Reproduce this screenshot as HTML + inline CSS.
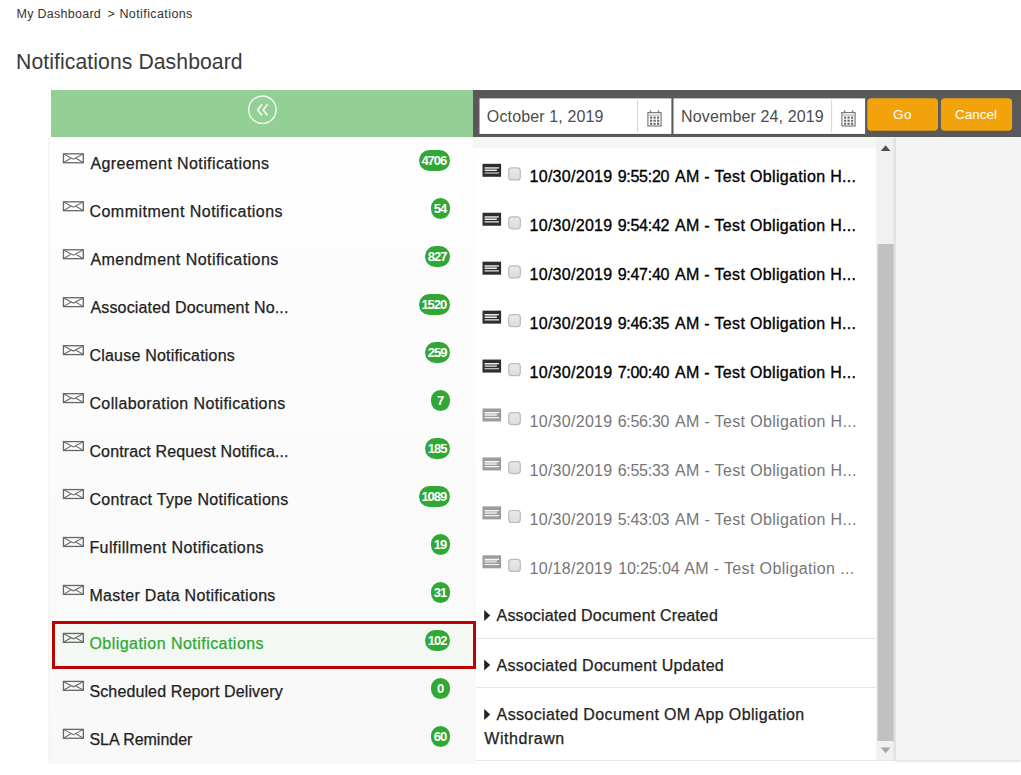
<!DOCTYPE html>
<html lang="en"><head><meta charset="utf-8"><title>Notifications Dashboard</title>
<style>
html,body{margin:0;padding:0;background:#fff;}
body{width:1021px;height:775px;position:relative;overflow:hidden;font-family:"Liberation Sans",sans-serif;}
.a{position:absolute;display:block;}
.t{position:absolute;white-space:pre;line-height:20px;font-family:"Liberation Sans",sans-serif;}
.badge{position:absolute;height:21px;border-radius:10.5px;background:#2fa836;color:#fff;font-weight:bold;font-size:13px;line-height:22px;text-align:center;letter-spacing:-1px;font-family:"Liberation Sans",sans-serif;text-indent:-1px;}
</style></head><body>
<!-- left header -->
<div class="a" style="left:51px;top:90px;width:422px;height:47px;background:#94cf96"></div>
<!-- left list panel -->
<div class="a" style="left:48px;top:137px;width:428px;height:627px;background:linear-gradient(#fefefe,#f8f8f8);border-left:2px solid #f6f6f6;box-sizing:border-box"></div>
<div class="a" style="left:52px;top:621px;width:424px;height:48px;box-sizing:border-box;border:3px solid #c00000;background:#f3f8f2"></div>
<!-- dark toolbar -->
<div class="a" style="left:473px;top:90px;width:548px;height:47px;background:#595959"></div>
<svg class="a" style="left:0;top:0" width="1021" height="775" viewBox="0 0 1021 775">
<rect x="479.5" y="98.4" width="191.9" height="35.5" fill="#fff"/>
<rect x="673.5" y="98.4" width="191.6" height="35.5" fill="#fff"/>
<rect x="637.1" y="100" width="1" height="32" fill="#d4d4d4"/>
<rect x="831.1" y="100" width="1" height="32" fill="#d4d4d4"/>
<rect x="867.2" y="98.3" width="70.8" height="32.4" rx="4" fill="#f2a30b"/>
<rect x="940.9" y="98.3" width="71.2" height="32.4" rx="4" fill="#f2a30b"/>
</svg>
<!-- content area -->
<div class="a" style="left:473px;top:137px;width:403px;height:11.4px;background:#f3f8f2"></div>
<div class="a" style="left:476px;top:638px;width:400px;height:1px;background:#e6e6e6"></div>
<div class="a" style="left:476px;top:687px;width:400px;height:1px;background:#e6e6e6"></div>
<div class="a" style="left:476px;top:760px;width:419px;height:1px;background:#e6e6e6"></div>
<!-- scrollbar -->
<div class="a" style="left:876px;top:137px;width:19px;height:623px;background:#f1f1f1"></div>
<svg class="a" style="left:0;top:0" width="1021" height="775" viewBox="0 0 1021 775"><rect x="877.6" y="244" width="16" height="497" fill="#c1c1c1"/></svg>
<!-- right panel -->
<div class="a" style="left:895px;top:137px;width:126px;height:623px;background:#f4f4f4;border-left:1px solid #e2e2e2;box-sizing:border-box;box-shadow:0 1px 3px rgba(0,0,0,0.18)"></div>
<!-- icons overlay -->
<svg class="a" style="left:0;top:0" width="1021" height="775" viewBox="0 0 1021 775">
<defs><linearGradient id="cbg" x1="0" y1="0" x2="0" y2="1"><stop offset="0" stop-color="#e9e9e9"/><stop offset="1" stop-color="#dcdcdc"/></linearGradient></defs>
<g transform="translate(62.80,153.20)"><rect x="0.65" y="0.65" width="19.9" height="8.9" fill="none" stroke="#666" stroke-width="1.3"/><path d="M0.9 0.9 L10.6 6 L20.3 0.9 M0.9 9.3 L8.5 4.9 M20.3 9.3 L12.7 4.9" fill="none" stroke="#6c6c6c" stroke-width="1.1"/></g>
<g transform="translate(62.80,201.16)"><rect x="0.65" y="0.65" width="19.9" height="8.9" fill="none" stroke="#666" stroke-width="1.3"/><path d="M0.9 0.9 L10.6 6 L20.3 0.9 M0.9 9.3 L8.5 4.9 M20.3 9.3 L12.7 4.9" fill="none" stroke="#6c6c6c" stroke-width="1.1"/></g>
<g transform="translate(62.80,249.12)"><rect x="0.65" y="0.65" width="19.9" height="8.9" fill="none" stroke="#666" stroke-width="1.3"/><path d="M0.9 0.9 L10.6 6 L20.3 0.9 M0.9 9.3 L8.5 4.9 M20.3 9.3 L12.7 4.9" fill="none" stroke="#6c6c6c" stroke-width="1.1"/></g>
<g transform="translate(62.80,297.08)"><rect x="0.65" y="0.65" width="19.9" height="8.9" fill="none" stroke="#666" stroke-width="1.3"/><path d="M0.9 0.9 L10.6 6 L20.3 0.9 M0.9 9.3 L8.5 4.9 M20.3 9.3 L12.7 4.9" fill="none" stroke="#6c6c6c" stroke-width="1.1"/></g>
<g transform="translate(62.80,345.04)"><rect x="0.65" y="0.65" width="19.9" height="8.9" fill="none" stroke="#666" stroke-width="1.3"/><path d="M0.9 0.9 L10.6 6 L20.3 0.9 M0.9 9.3 L8.5 4.9 M20.3 9.3 L12.7 4.9" fill="none" stroke="#6c6c6c" stroke-width="1.1"/></g>
<g transform="translate(62.80,393.00)"><rect x="0.65" y="0.65" width="19.9" height="8.9" fill="none" stroke="#666" stroke-width="1.3"/><path d="M0.9 0.9 L10.6 6 L20.3 0.9 M0.9 9.3 L8.5 4.9 M20.3 9.3 L12.7 4.9" fill="none" stroke="#6c6c6c" stroke-width="1.1"/></g>
<g transform="translate(62.80,440.96)"><rect x="0.65" y="0.65" width="19.9" height="8.9" fill="none" stroke="#666" stroke-width="1.3"/><path d="M0.9 0.9 L10.6 6 L20.3 0.9 M0.9 9.3 L8.5 4.9 M20.3 9.3 L12.7 4.9" fill="none" stroke="#6c6c6c" stroke-width="1.1"/></g>
<g transform="translate(62.80,488.92)"><rect x="0.65" y="0.65" width="19.9" height="8.9" fill="none" stroke="#666" stroke-width="1.3"/><path d="M0.9 0.9 L10.6 6 L20.3 0.9 M0.9 9.3 L8.5 4.9 M20.3 9.3 L12.7 4.9" fill="none" stroke="#6c6c6c" stroke-width="1.1"/></g>
<g transform="translate(62.80,536.88)"><rect x="0.65" y="0.65" width="19.9" height="8.9" fill="none" stroke="#666" stroke-width="1.3"/><path d="M0.9 0.9 L10.6 6 L20.3 0.9 M0.9 9.3 L8.5 4.9 M20.3 9.3 L12.7 4.9" fill="none" stroke="#6c6c6c" stroke-width="1.1"/></g>
<g transform="translate(62.80,584.84)"><rect x="0.65" y="0.65" width="19.9" height="8.9" fill="none" stroke="#666" stroke-width="1.3"/><path d="M0.9 0.9 L10.6 6 L20.3 0.9 M0.9 9.3 L8.5 4.9 M20.3 9.3 L12.7 4.9" fill="none" stroke="#6c6c6c" stroke-width="1.1"/></g>
<g transform="translate(62.80,632.80)"><rect x="0.65" y="0.65" width="19.9" height="8.9" fill="none" stroke="#666" stroke-width="1.3"/><path d="M0.9 0.9 L10.6 6 L20.3 0.9 M0.9 9.3 L8.5 4.9 M20.3 9.3 L12.7 4.9" fill="none" stroke="#6c6c6c" stroke-width="1.1"/></g>
<g transform="translate(62.80,680.76)"><rect x="0.65" y="0.65" width="19.9" height="8.9" fill="none" stroke="#666" stroke-width="1.3"/><path d="M0.9 0.9 L10.6 6 L20.3 0.9 M0.9 9.3 L8.5 4.9 M20.3 9.3 L12.7 4.9" fill="none" stroke="#6c6c6c" stroke-width="1.1"/></g>
<g transform="translate(62.80,728.72)"><rect x="0.65" y="0.65" width="19.9" height="8.9" fill="none" stroke="#666" stroke-width="1.3"/><path d="M0.9 0.9 L10.6 6 L20.3 0.9 M0.9 9.3 L8.5 4.9 M20.3 9.3 L12.7 4.9" fill="none" stroke="#6c6c6c" stroke-width="1.1"/></g>
<g transform="translate(482.50,163.80)"><rect x="0" y="0" width="18.6" height="13" fill="#2e2e2e"/><rect x="2.1" y="4.6" width="12.4" height="1.5" fill="#fff" opacity="0.45"/><path d="M2.1 4.1 H16.5 M2.1 6.7 H14.3 M2.1 9.2 H16.5" stroke="#fff" stroke-width="1.2" fill="none" opacity="0.9"/></g>
<rect x="508.70" y="167.90" width="11.6" height="12" rx="3" ry="3" fill="url(#cbg)" stroke="#bbb" stroke-width="1.2"/>
<g transform="translate(482.50,212.74)"><rect x="0" y="0" width="18.6" height="13" fill="#2e2e2e"/><rect x="2.1" y="4.6" width="12.4" height="1.5" fill="#fff" opacity="0.45"/><path d="M2.1 4.1 H16.5 M2.1 6.7 H14.3 M2.1 9.2 H16.5" stroke="#fff" stroke-width="1.2" fill="none" opacity="0.9"/></g>
<rect x="508.70" y="216.84" width="11.6" height="12" rx="3" ry="3" fill="url(#cbg)" stroke="#bbb" stroke-width="1.2"/>
<g transform="translate(482.50,261.68)"><rect x="0" y="0" width="18.6" height="13" fill="#2e2e2e"/><rect x="2.1" y="4.6" width="12.4" height="1.5" fill="#fff" opacity="0.45"/><path d="M2.1 4.1 H16.5 M2.1 6.7 H14.3 M2.1 9.2 H16.5" stroke="#fff" stroke-width="1.2" fill="none" opacity="0.9"/></g>
<rect x="508.70" y="265.78" width="11.6" height="12" rx="3" ry="3" fill="url(#cbg)" stroke="#bbb" stroke-width="1.2"/>
<g transform="translate(482.50,310.62)"><rect x="0" y="0" width="18.6" height="13" fill="#2e2e2e"/><rect x="2.1" y="4.6" width="12.4" height="1.5" fill="#fff" opacity="0.45"/><path d="M2.1 4.1 H16.5 M2.1 6.7 H14.3 M2.1 9.2 H16.5" stroke="#fff" stroke-width="1.2" fill="none" opacity="0.9"/></g>
<rect x="508.70" y="314.72" width="11.6" height="12" rx="3" ry="3" fill="url(#cbg)" stroke="#bbb" stroke-width="1.2"/>
<g transform="translate(482.50,359.56)"><rect x="0" y="0" width="18.6" height="13" fill="#2e2e2e"/><rect x="2.1" y="4.6" width="12.4" height="1.5" fill="#fff" opacity="0.45"/><path d="M2.1 4.1 H16.5 M2.1 6.7 H14.3 M2.1 9.2 H16.5" stroke="#fff" stroke-width="1.2" fill="none" opacity="0.9"/></g>
<rect x="508.70" y="363.66" width="11.6" height="12" rx="3" ry="3" fill="url(#cbg)" stroke="#bbb" stroke-width="1.2"/>
<g transform="translate(482.50,408.50)"><rect x="0" y="0" width="18.6" height="13" fill="#9c9c9c"/><rect x="2.1" y="4.6" width="12.4" height="1.5" fill="#fff" opacity="0.45"/><path d="M2.1 4.1 H16.5 M2.1 6.7 H14.3 M2.1 9.2 H16.5" stroke="#fff" stroke-width="1.2" fill="none" opacity="0.9"/></g>
<rect x="508.70" y="412.60" width="11.6" height="12" rx="3" ry="3" fill="url(#cbg)" stroke="#bbb" stroke-width="1.2"/>
<g transform="translate(482.50,457.44)"><rect x="0" y="0" width="18.6" height="13" fill="#9c9c9c"/><rect x="2.1" y="4.6" width="12.4" height="1.5" fill="#fff" opacity="0.45"/><path d="M2.1 4.1 H16.5 M2.1 6.7 H14.3 M2.1 9.2 H16.5" stroke="#fff" stroke-width="1.2" fill="none" opacity="0.9"/></g>
<rect x="508.70" y="461.54" width="11.6" height="12" rx="3" ry="3" fill="url(#cbg)" stroke="#bbb" stroke-width="1.2"/>
<g transform="translate(482.50,506.38)"><rect x="0" y="0" width="18.6" height="13" fill="#9c9c9c"/><rect x="2.1" y="4.6" width="12.4" height="1.5" fill="#fff" opacity="0.45"/><path d="M2.1 4.1 H16.5 M2.1 6.7 H14.3 M2.1 9.2 H16.5" stroke="#fff" stroke-width="1.2" fill="none" opacity="0.9"/></g>
<rect x="508.70" y="510.48" width="11.6" height="12" rx="3" ry="3" fill="url(#cbg)" stroke="#bbb" stroke-width="1.2"/>
<g transform="translate(482.50,555.32)"><rect x="0" y="0" width="18.6" height="13" fill="#9c9c9c"/><rect x="2.1" y="4.6" width="12.4" height="1.5" fill="#fff" opacity="0.45"/><path d="M2.1 4.1 H16.5 M2.1 6.7 H14.3 M2.1 9.2 H16.5" stroke="#fff" stroke-width="1.2" fill="none" opacity="0.9"/></g>
<rect x="508.70" y="559.42" width="11.6" height="12" rx="3" ry="3" fill="url(#cbg)" stroke="#bbb" stroke-width="1.2"/>
<path transform="translate(484.2,610.10)" d="M0 0 L6 5.5 L0 11 Z" fill="#222"/>
<path transform="translate(484.2,659.50)" d="M0 0 L6 5.5 L0 11 Z" fill="#222"/>
<path transform="translate(484.2,709.00)" d="M0 0 L6 5.5 L0 11 Z" fill="#222"/>
<g transform="translate(647.30,110.20)"><rect x="0.6" y="2.4" width="13.2" height="13.4" fill="#fff" stroke="#7d7d7d" stroke-width="1.2"/><path d="M3.2 0.4 V2.8 M11.2 0.4 V2.8" stroke="#777" stroke-width="1.4"/><path d="M1.2 4.9 H13.2" stroke="#aaa" stroke-width="1"/><rect x="2.70" y="6.40" width="2.2" height="2" fill="#666"/><rect x="2.70" y="9.50" width="2.2" height="2" fill="#666"/><rect x="2.70" y="12.60" width="2.2" height="2" fill="#666"/><rect x="6.20" y="6.40" width="2.2" height="2" fill="#666"/><rect x="6.20" y="9.50" width="2.2" height="2" fill="#666"/><rect x="6.20" y="12.60" width="2.2" height="2" fill="#666"/><rect x="9.70" y="6.40" width="2.2" height="2" fill="#666"/><rect x="9.70" y="9.50" width="2.2" height="2" fill="#666"/><rect x="9.70" y="12.60" width="2.2" height="2" fill="#666"/></g>
<g transform="translate(841.30,110.20)"><rect x="0.6" y="2.4" width="13.2" height="13.4" fill="#fff" stroke="#7d7d7d" stroke-width="1.2"/><path d="M3.2 0.4 V2.8 M11.2 0.4 V2.8" stroke="#777" stroke-width="1.4"/><path d="M1.2 4.9 H13.2" stroke="#aaa" stroke-width="1"/><rect x="2.70" y="6.40" width="2.2" height="2" fill="#666"/><rect x="2.70" y="9.50" width="2.2" height="2" fill="#666"/><rect x="2.70" y="12.60" width="2.2" height="2" fill="#666"/><rect x="6.20" y="6.40" width="2.2" height="2" fill="#666"/><rect x="6.20" y="9.50" width="2.2" height="2" fill="#666"/><rect x="6.20" y="12.60" width="2.2" height="2" fill="#666"/><rect x="9.70" y="6.40" width="2.2" height="2" fill="#666"/><rect x="9.70" y="9.50" width="2.2" height="2" fill="#666"/><rect x="9.70" y="12.60" width="2.2" height="2" fill="#666"/></g>
<circle cx="262.4" cy="109.7" r="13.7" fill="none" stroke="#f1faf1" stroke-width="1.4"/>
<path d="M262 104.2 L257.7 109.9 L262 115.6 M267.5 104.2 L263.2 109.9 L267.5 115.6" fill="none" stroke="#f6fbf6" stroke-width="1.7"/>
<path d="M880.8 151 L885.6 145.3 L890.4 151 Z" fill="#505050"/>
<path d="M880.8 747.6 L885.6 753.2 L890.4 747.6 Z" fill="#a3a3a3"/>
</svg>
<span class="badge" style="left:419.0px;top:150.4px;width:30.7px">4706</span>
<span class="badge" style="left:431.3px;top:198.4px;width:18.4px">54</span>
<span class="badge" style="left:425.4px;top:246.3px;width:24.3px">827</span>
<span class="badge" style="left:419.0px;top:294.3px;width:30.7px">1520</span>
<span class="badge" style="left:425.4px;top:342.2px;width:24.3px">259</span>
<span class="badge" style="left:431.3px;top:390.2px;width:18.4px">7</span>
<span class="badge" style="left:425.4px;top:438.2px;width:24.3px">185</span>
<span class="badge" style="left:419.0px;top:486.1px;width:30.7px">1089</span>
<span class="badge" style="left:431.3px;top:534.1px;width:18.4px">19</span>
<span class="badge" style="left:431.3px;top:582.0px;width:18.4px">31</span>
<span class="badge" style="left:425.4px;top:630.0px;width:24.3px">102</span>
<span class="badge" style="left:431.3px;top:678.0px;width:18.4px">0</span>
<span class="badge" style="left:431.3px;top:725.9px;width:18.4px">60</span>
<span class="t" style="left:16.55px;top:4.27px;font-size:12.5px;color:#333;letter-spacing:0.271px;">My Dashboard</span>
<span class="t" style="left:107.45px;top:4.27px;font-size:12.5px;color:#333;letter-spacing:0.737px;">&gt;</span>
<span class="t" style="left:119.45px;top:4.27px;font-size:12.5px;color:#333;letter-spacing:0.404px;">Notifications</span>
<span class="t" style="left:16.03px;top:52.20px;font-size:21.2px;color:#3a3a3a;letter-spacing:0.077px;">Notifications Dashboard</span>
<span class="t" style="left:90.40px;top:154.46px;font-size:16px;color:#222;letter-spacing:0.397px;-webkit-text-stroke:0.25px currentColor;">Agreement Notifications</span>
<span class="t" style="left:89.44px;top:202.42px;font-size:16px;color:#222;letter-spacing:0.472px;-webkit-text-stroke:0.25px currentColor;">Commitment Notifications</span>
<span class="t" style="left:90.40px;top:250.38px;font-size:16px;color:#222;letter-spacing:0.454px;-webkit-text-stroke:0.25px currentColor;">Amendment Notifications</span>
<span class="t" style="left:90.40px;top:298.34px;font-size:16px;color:#222;letter-spacing:0.173px;-webkit-text-stroke:0.25px currentColor;">Associated Document No...</span>
<span class="t" style="left:89.44px;top:346.30px;font-size:16px;color:#222;letter-spacing:0.210px;-webkit-text-stroke:0.25px currentColor;">Clause Notifications</span>
<span class="t" style="left:89.44px;top:394.26px;font-size:16px;color:#222;letter-spacing:0.379px;-webkit-text-stroke:0.25px currentColor;">Collaboration Notifications</span>
<span class="t" style="left:89.44px;top:442.22px;font-size:16px;color:#222;letter-spacing:0.127px;-webkit-text-stroke:0.25px currentColor;">Contract Request Notifica...</span>
<span class="t" style="left:89.44px;top:490.18px;font-size:16px;color:#222;letter-spacing:0.307px;-webkit-text-stroke:0.25px currentColor;">Contract Type Notifications</span>
<span class="t" style="left:89.44px;top:538.14px;font-size:16px;color:#222;letter-spacing:0.396px;-webkit-text-stroke:0.25px currentColor;">Fulfillment Notifications</span>
<span class="t" style="left:89.44px;top:586.10px;font-size:16px;color:#222;letter-spacing:0.299px;-webkit-text-stroke:0.25px currentColor;">Master Data Notifications</span>
<span class="t" style="left:89.44px;top:634.06px;font-size:16px;color:#2ea836;letter-spacing:0.457px;-webkit-text-stroke:0.25px currentColor;">Obligation Notifications</span>
<span class="t" style="left:89.44px;top:682.02px;font-size:16px;color:#222;letter-spacing:0.123px;-webkit-text-stroke:0.25px currentColor;">Scheduled Report Delivery</span>
<span class="t" style="left:89.44px;top:729.98px;font-size:16px;color:#222;letter-spacing:-0.023px;-webkit-text-stroke:0.25px currentColor;">SLA Reminder</span>
<span class="t" style="left:529.54px;top:167.26px;font-size:16px;color:#000;letter-spacing:0.282px;-webkit-text-stroke:0.33px currentColor;">10/30/2019</span>
<span class="t" style="left:617.64px;top:167.26px;font-size:16px;color:#000;letter-spacing:-0.256px;-webkit-text-stroke:0.33px currentColor;">9:55:20</span>
<span class="t" style="left:674.90px;top:167.26px;font-size:16px;color:#000;letter-spacing:0.336px;-webkit-text-stroke:0.33px currentColor;">AM - Test Obligation H...</span>
<span class="t" style="left:529.54px;top:216.20px;font-size:16px;color:#000;letter-spacing:0.282px;-webkit-text-stroke:0.33px currentColor;">10/30/2019</span>
<span class="t" style="left:617.64px;top:216.20px;font-size:16px;color:#000;letter-spacing:-0.256px;-webkit-text-stroke:0.33px currentColor;">9:54:42</span>
<span class="t" style="left:674.90px;top:216.20px;font-size:16px;color:#000;letter-spacing:0.336px;-webkit-text-stroke:0.33px currentColor;">AM - Test Obligation H...</span>
<span class="t" style="left:529.54px;top:265.14px;font-size:16px;color:#000;letter-spacing:0.282px;-webkit-text-stroke:0.33px currentColor;">10/30/2019</span>
<span class="t" style="left:617.64px;top:265.14px;font-size:16px;color:#000;letter-spacing:-0.256px;-webkit-text-stroke:0.33px currentColor;">9:47:40</span>
<span class="t" style="left:674.90px;top:265.14px;font-size:16px;color:#000;letter-spacing:0.336px;-webkit-text-stroke:0.33px currentColor;">AM - Test Obligation H...</span>
<span class="t" style="left:529.54px;top:314.08px;font-size:16px;color:#000;letter-spacing:0.282px;-webkit-text-stroke:0.33px currentColor;">10/30/2019</span>
<span class="t" style="left:617.64px;top:314.08px;font-size:16px;color:#000;letter-spacing:-0.256px;-webkit-text-stroke:0.33px currentColor;">9:46:35</span>
<span class="t" style="left:674.90px;top:314.08px;font-size:16px;color:#000;letter-spacing:0.336px;-webkit-text-stroke:0.33px currentColor;">AM - Test Obligation H...</span>
<span class="t" style="left:529.54px;top:363.02px;font-size:16px;color:#000;letter-spacing:0.282px;-webkit-text-stroke:0.33px currentColor;">10/30/2019</span>
<span class="t" style="left:617.64px;top:363.02px;font-size:16px;color:#000;letter-spacing:-0.256px;-webkit-text-stroke:0.33px currentColor;">7:00:40</span>
<span class="t" style="left:674.90px;top:363.02px;font-size:16px;color:#000;letter-spacing:0.336px;-webkit-text-stroke:0.33px currentColor;">AM - Test Obligation H...</span>
<span class="t" style="left:529.54px;top:411.96px;font-size:16px;color:#767676;letter-spacing:0.282px;">10/30/2019</span>
<span class="t" style="left:617.64px;top:411.96px;font-size:16px;color:#767676;letter-spacing:-0.256px;">6:56:30</span>
<span class="t" style="left:674.90px;top:411.96px;font-size:16px;color:#767676;letter-spacing:0.352px;">AM - Test Obligation H...</span>
<span class="t" style="left:529.54px;top:460.90px;font-size:16px;color:#767676;letter-spacing:0.282px;">10/30/2019</span>
<span class="t" style="left:617.64px;top:460.90px;font-size:16px;color:#767676;letter-spacing:-0.256px;">6:55:33</span>
<span class="t" style="left:674.90px;top:460.90px;font-size:16px;color:#767676;letter-spacing:0.352px;">AM - Test Obligation H...</span>
<span class="t" style="left:529.54px;top:509.84px;font-size:16px;color:#767676;letter-spacing:0.282px;">10/30/2019</span>
<span class="t" style="left:617.64px;top:509.84px;font-size:16px;color:#767676;letter-spacing:-0.256px;">5:43:03</span>
<span class="t" style="left:674.90px;top:509.84px;font-size:16px;color:#767676;letter-spacing:0.352px;">AM - Test Obligation H...</span>
<span class="t" style="left:529.54px;top:558.78px;font-size:16px;color:#767676;letter-spacing:0.282px;">10/18/2019</span>
<span class="t" style="left:618.24px;top:558.78px;font-size:16px;color:#767676;letter-spacing:-0.135px;">10:25:04</span>
<span class="t" style="left:684.20px;top:558.78px;font-size:16px;color:#767676;letter-spacing:0.369px;">AM - Test Obligation ...</span>
<span class="t" style="left:496.60px;top:606.26px;font-size:16px;color:#222;letter-spacing:0.163px;-webkit-text-stroke:0.25px currentColor;">Associated Document Created</span>
<span class="t" style="left:496.60px;top:655.66px;font-size:16px;color:#222;letter-spacing:0.253px;-webkit-text-stroke:0.25px currentColor;">Associated Document Updated</span>
<span class="t" style="left:496.60px;top:705.16px;font-size:16px;color:#222;letter-spacing:0.368px;-webkit-text-stroke:0.25px currentColor;">Associated Document OM App Obligation</span>
<span class="t" style="left:484.30px;top:728.66px;font-size:16px;color:#222;letter-spacing:0.547px;-webkit-text-stroke:0.25px currentColor;">Withdrawn</span>
<span class="t" style="left:486.84px;top:106.86px;font-size:16px;color:#4c4c4c;letter-spacing:0.137px;">October 1, 2019</span>
<span class="t" style="left:681.04px;top:106.86px;font-size:16px;color:#4c4c4c;letter-spacing:0.133px;">November 24, 2019</span>
<span class="t" style="left:893.09px;top:105.02px;font-size:13.5px;color:#fff;letter-spacing:0.317px;">Go</span>
<span class="t" style="left:954.89px;top:105.02px;font-size:13.5px;color:#fff;letter-spacing:0.003px;">Cancel</span>
</body></html>
